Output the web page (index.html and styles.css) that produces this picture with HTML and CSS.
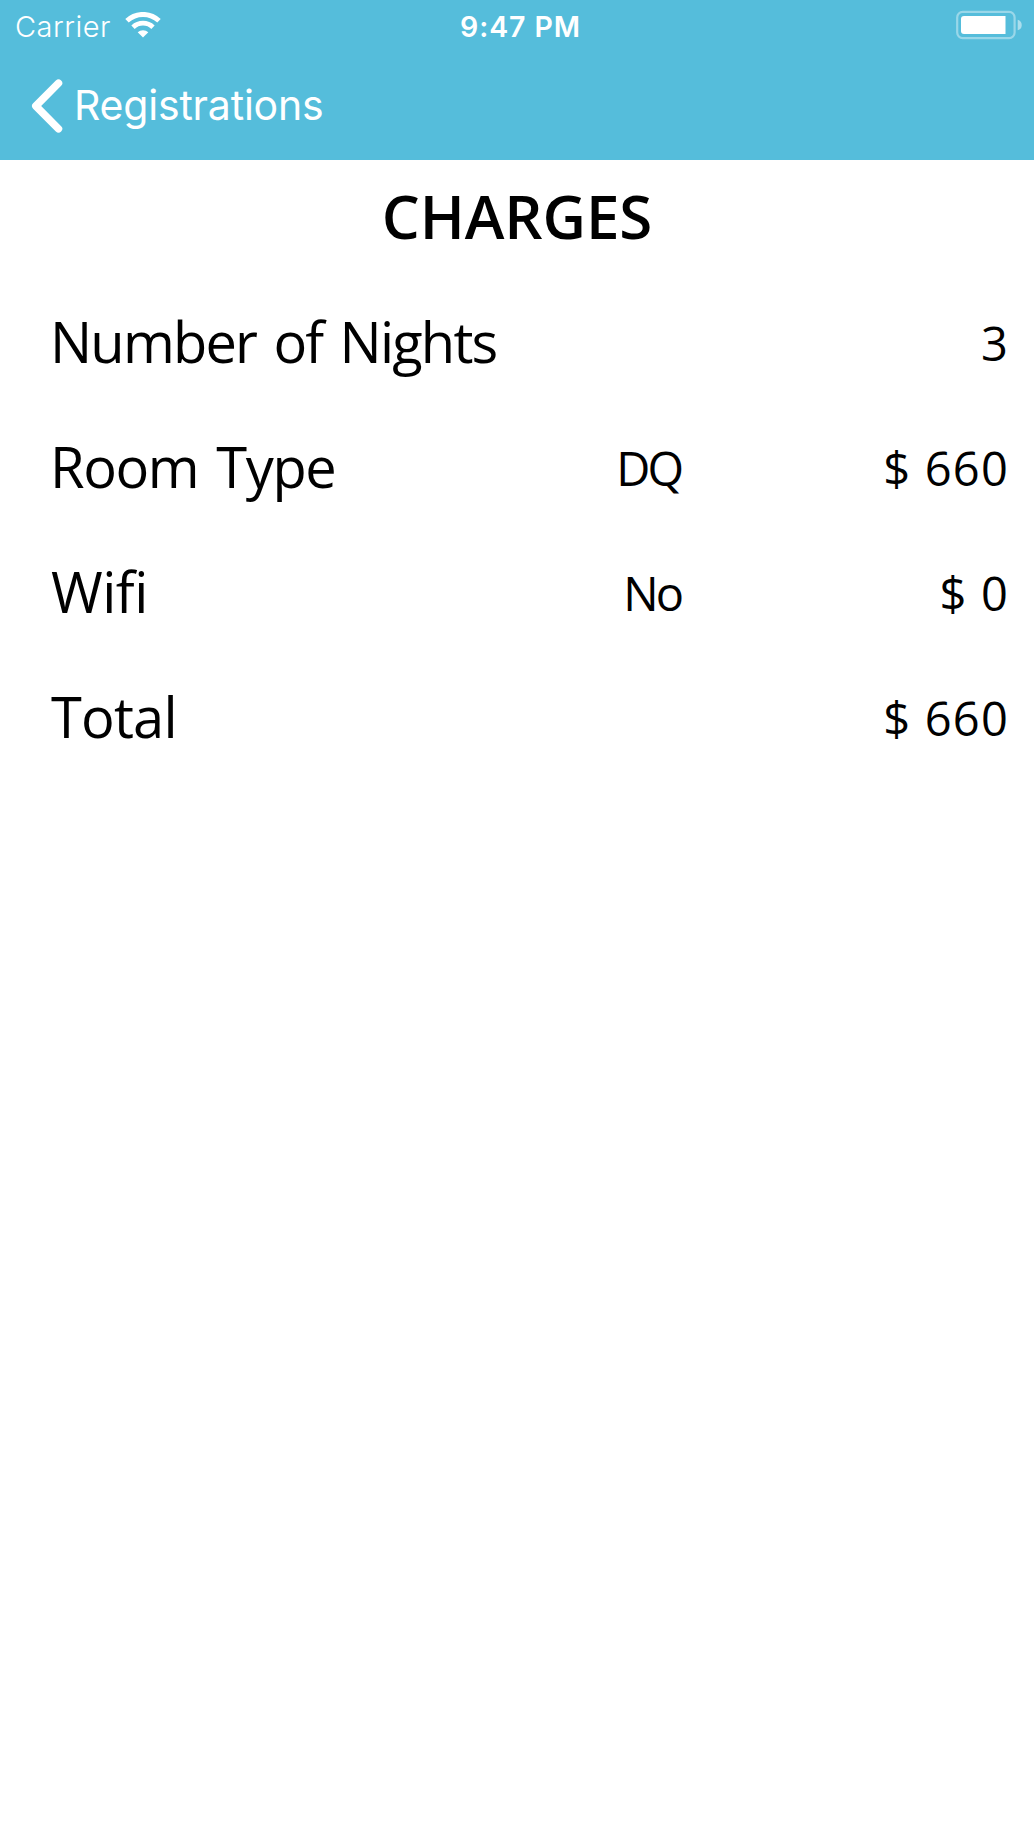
FILE: index.html
```html
<!DOCTYPE html>
<html lang="en">
<head>
<meta charset="utf-8">
<title>Charges</title>
<link rel="stylesheet" href="styles.css">
</head>
<body>
<header class="top">
  <div class="status">
    <div class="carrier">
      <span class="carrier-name">Carrier</span>
      <svg class="wifi" width="36" height="26" viewBox="0 0 36 26" fill="none" stroke="#fff">
        <path d="M2 8.800A23.300 23.300 0 0 1 34 8.800" stroke-width="5"/>
        <path d="M8 15.200A14.500 14.500 0 0 1 28 15.200" stroke-width="4.800"/>
        <path d="M18 25.600L12.700 20.300A7.600 7.600 0 0 1 23.300 20.300Z" fill="#fff" stroke="none"/>
      </svg>
    </div>
    <time class="clock">9:47 PM</time>
    <svg class="battery" width="66" height="30" viewBox="0 0 66 30">
      <rect x="1.200" y="1.900" width="57.400" height="26.200" rx="5.500" fill="none" stroke="#fff" stroke-opacity=".4" stroke-width="2.200"/>
      <path d="M49.500 6H8a3 3 0 0 0-3 3v12a3 3 0 0 0 3 3h41.500z" fill="#fff"/>
      <path d="M61.700 9.700a5.500 5.500 0 0 1 0 10.600z" fill="#fff" fill-opacity=".5"/>
    </svg>
  </div>
  <nav class="nav">
    <svg class="chevron" width="32" height="54" viewBox="0 0 32 54" fill="none" stroke="#fff" stroke-width="7.500" stroke-linecap="round" stroke-linejoin="round">
      <path d="M27.500 4.200L4.800 27L27.500 49.800"/>
    </svg>
    <span class="back">Registrations</span>
  </nav>
</header>
<main>
  <h1 class="title">CHARGES</h1>
  <div class="row"><span class="label nights">Number of Nights</span><span class="value detail"></span><span class="value">3</span></div>
  <div class="row"><span class="label room">Room Type</span><span class="value detail">DQ</span><span class="value">$ 660</span></div>
  <div class="row"><span class="label internet">Wifi</span><span class="value detail">No</span><span class="value">$ 0</span></div>
  <div class="row"><span class="label total">Total</span><span class="value detail"></span><span class="value">$ 660</span></div>
</main>
</body>
</html>
```
FILE: styles.css
```css
body {
  margin: 0;
  background: #fff;
  color: #000;
  font-family: "Open Sans", "Noto Sans", sans-serif;
}
.top {
  height: 160px;
  background: #55bddb;
  color: #fff;
  font-family: Inter, "Liberation Sans", sans-serif;
}
.status {
  display: grid;
  grid-template-columns: 1fr auto 1fr;
  align-items: center;
  height: 52px;
  padding: 0 12px 0 15px;
}
.carrier {
  display: flex;
  align-items: center;
  gap: 14px;
}
.carrier-name {
  font-size: 29px;
  font-weight: 350;
  letter-spacing: 0.5px;
}
.wifi {
  margin-top: -2px;
}
.clock {
  padding: 0 0 0 4px;
  font-size: 28.5px;
  font-weight: 600;
  letter-spacing: 0.9px;
}
.battery {
  justify-self: end;
  margin-top: -2px;
}
.nav {
  display: flex;
  align-items: center;
  gap: 11px;
  height: 106px;
  padding: 0 0 2px 31px;
}
.chevron {
  margin-top: 1px;
}
.back {
  font-size: 41px;
  line-height: 54px;
  letter-spacing: -0.2px;
}
.title {
  margin: 0;
  height: 118px;
  font-size: 60px;
  font-weight: 600;
  line-height: 112px;
  letter-spacing: -0.1px;
  text-align: center;
}
.row {
  display: grid;
  grid-template-columns: 500px 134px 1fr;
  height: 125px;
  padding: 0 25px 0 50px;
  line-height: 125px;
  white-space: nowrap;
}
.label {
  padding-top: 1px;
  font-size: 56px;
}
.nights {
  letter-spacing: -1.8px;
  word-spacing: 4.5px;
}
.room {
  letter-spacing: -1.4px;
  word-spacing: 5px;
}
.internet {
  padding-left: 1px;
  letter-spacing: -0.5px;
}
.total {
  padding-left: 1px;
  letter-spacing: -0.8px;
}
.value {
  padding-top: 3px;
  font-size: 47px;
  letter-spacing: 1.2px;
  text-align: right;
}
.detail {
  padding-right: 3px;
  letter-spacing: -3px;
}
```
